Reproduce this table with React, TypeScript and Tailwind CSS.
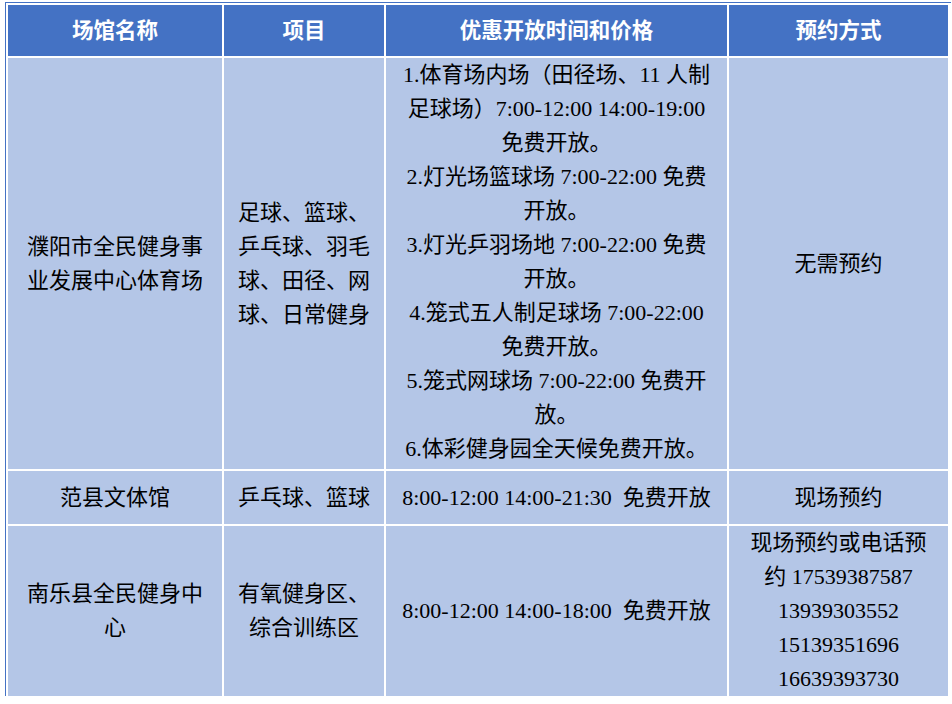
import React from "react";

const bodyFont = { fontFamily: '"Liberation Serif", "Noto Sans CJK SC", serif' };
const headFont = { fontFamily: '"Liberation Sans", "Noto Sans CJK SC", sans-serif' };

function Lines({ lines }: { lines: string[] }) {
  return (
    <div className="flex flex-col items-center">
      {lines.map((line, index) => (
        <span key={index} className="block whitespace-pre">
          {line}
        </span>
      ))}
    </div>
  );
}

function Cell({ lines, className = "" }: { lines: string[]; className?: string }) {
  return (
    <div className={`flex items-center justify-center bg-[#b4c6e7] text-center ${className}`}>
      <Lines lines={lines} />
    </div>
  );
}

const headers = ["场馆名称", "项目", "优惠开放时间和价格", "预约方式"];

export default function App() {
  return (
    <div className="min-h-[704px] w-[952px] bg-white pl-[5px] pt-[2px]">
      <div className="w-[946px] border-l border-t border-[#4472c4] pl-[2px] pt-[2px]">
        <div
          className="grid grid-cols-[214px_160px_341px_219px] grid-rows-[51px_411px_53px_170px] gap-[2px] text-[22px] leading-[34px] text-black"
          style={bodyFont}
        >
          {headers.map((title) => (
            <div
              key={title}
              className="flex items-center justify-center bg-[#4472c4] text-[21.5px] font-bold text-white"
              style={headFont}
            >
              {title}
            </div>
          ))}

          <Cell lines={["濮阳市全民健身事", "业发展中心体育场"]} />
          <Cell lines={["足球、篮球、", "乒乓球、羽毛", "球、田径、网", "球、日常健身"]} />
          <div className="flex justify-center bg-[#b4c6e7] text-center">
            <Lines
              lines={[
                "1.体育场内场（田径场、11 人制",
                "足球场）7:00-12:00 14:00-19:00",
                "免费开放。",
                "2.灯光场篮球场 7:00-22:00 免费",
                "开放。",
                "3.灯光乒羽场地 7:00-22:00 免费",
                "开放。",
                "4.笼式五人制足球场 7:00-22:00",
                "免费开放。",
                "5.笼式网球场 7:00-22:00 免费开",
                "放。",
                "6.体彩健身园全天候免费开放。",
              ]}
            />
          </div>
          <Cell lines={["无需预约"]} />

          <Cell lines={["范县文体馆"]} />
          <Cell lines={["乒乓球、篮球"]} />
          <Cell lines={["8:00-12:00 14:00-21:30\u00a0\u00a0免费开放"]} />
          <Cell lines={["现场预约"]} />

          <Cell lines={["南乐县全民健身中", "心"]} />
          <Cell lines={["有氧健身区、", "综合训练区"]} />
          <Cell lines={["8:00-12:00 14:00-18:00\u00a0\u00a0免费开放"]} />
          <Cell
            lines={["现场预约或电话预", "约 17539387587", "13939303552", "15139351696", "16639393730"]}
          />
        </div>
      </div>
    </div>
  );
}
